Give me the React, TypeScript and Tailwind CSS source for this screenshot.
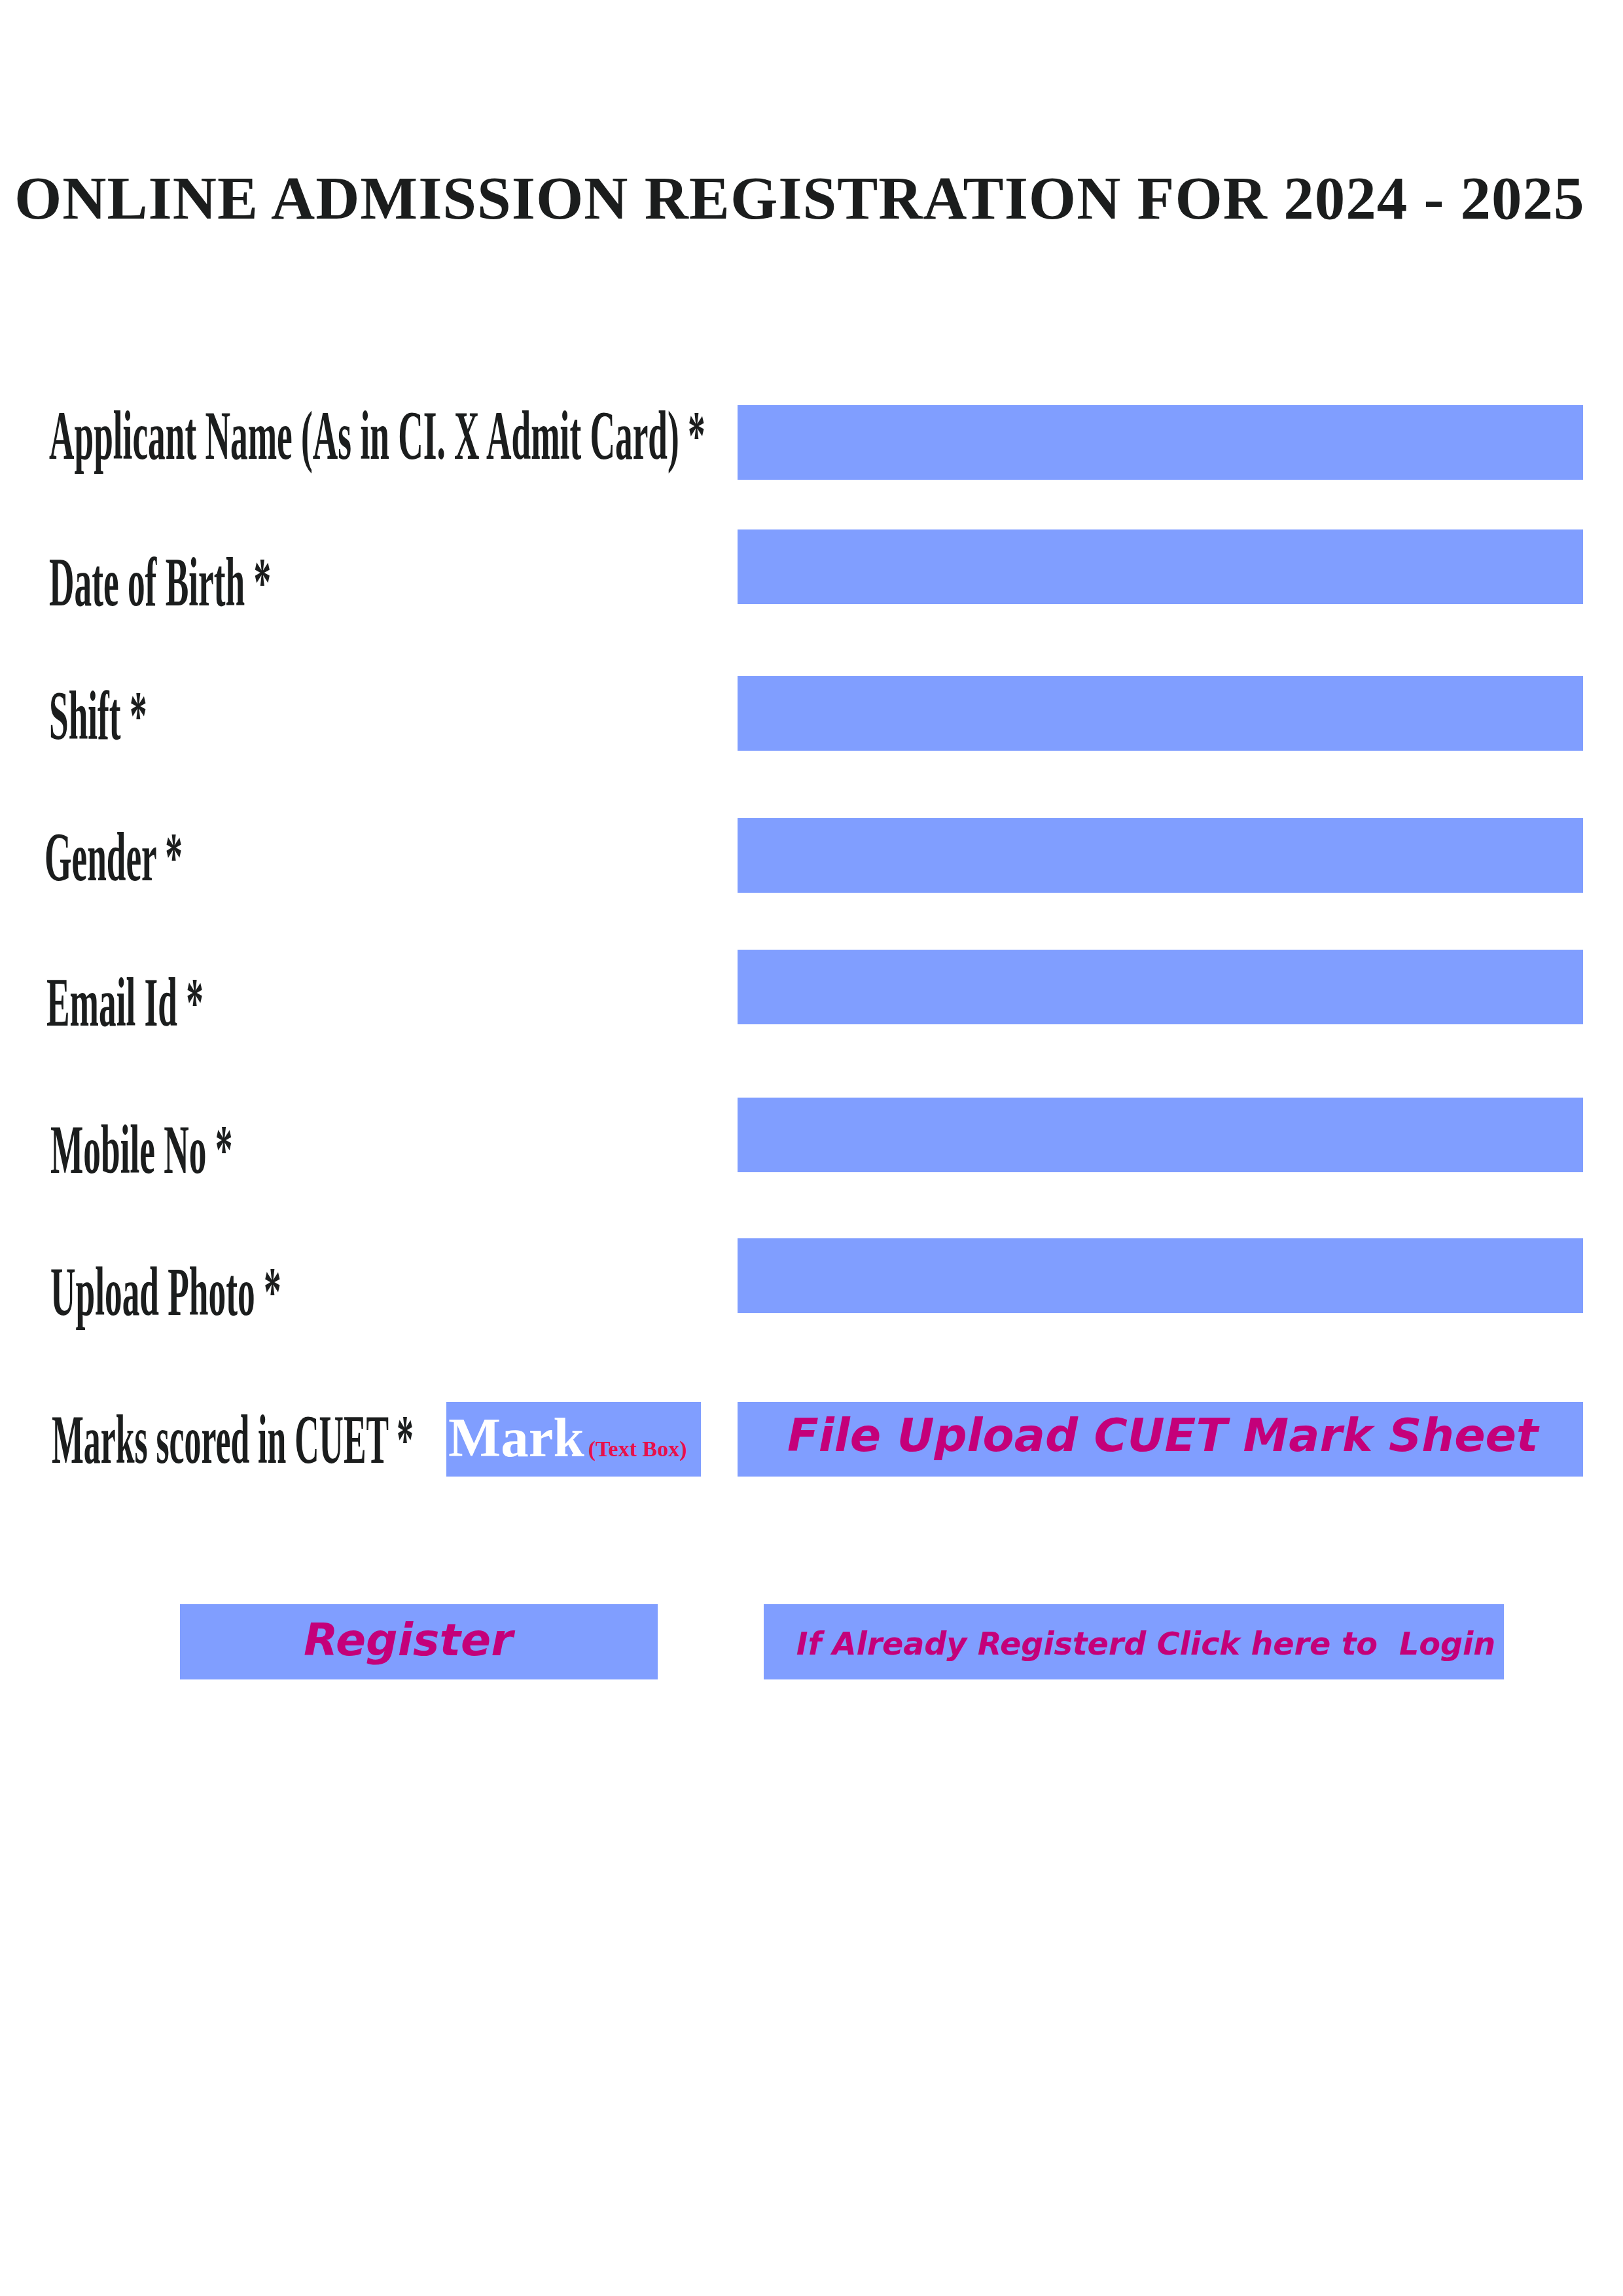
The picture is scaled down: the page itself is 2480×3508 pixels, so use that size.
const labelFont = { fontFamily: '"Liberation Serif", "Times New Roman", serif' };
const sansFont = { fontFamily: '"DejaVu Sans", Verdana, sans-serif' };

type Row = { label: string; mt: string; labelMt: string; labelMl: string };

const rows: Row[] = [
  { label: "Applicant Name (As in CI. X Admit Card) *", mt: "mt-[270px]", labelMt: "mt-[-6px]", labelMl: "ml-0" },
  { label: "Date of Birth *", mt: "mt-[76px]", labelMt: "mt-[28px]", labelMl: "ml-0" },
  { label: "Shift *", mt: "mt-[110px]", labelMt: "mt-[8px]", labelMl: "ml-0" },
  { label: "Gender *", mt: "mt-[103px]", labelMt: "mt-[7px]", labelMl: "ml-[-7px]" },
  { label: "Email Id *", mt: "mt-[87px]", labelMt: "mt-[28px]", labelMl: "ml-[-4px]" },
  { label: "Mobile No *", mt: "mt-[112px]", labelMt: "mt-[27px]", labelMl: "ml-[2px]" },
  { label: "Upload Photo *", mt: "mt-[101px]", labelMt: "mt-[29px]", labelMl: "ml-[2px]" },
];

function Label({ text, className, scale = "scale-x-[0.503]" }: { text: string; className: string; scale?: string }) {
  return (
    <div
      className={`whitespace-nowrap origin-left ${scale} font-bold text-[106px] leading-none text-[#1b1d1d] ${className}`}
      style={labelFont}
    >
      {text}
    </div>
  );
}

function App() {
  return (
    <div className="w-[2480px] min-h-[3508px] bg-white">
      <h1
        className="pt-[256px] pl-[22px] whitespace-nowrap font-bold text-[93px] leading-none tracking-[1px] text-[#1b1d1d]"
        style={labelFont}
      >
        ONLINE ADMISSION REGISTRATION FOR 2024 - 2025
      </h1>

      <div className="pl-[75px]">
        {rows.map((r) => (
          <div key={r.label} className={`flex h-[114px] ${r.mt}`}>
            <div className="w-[1052px] shrink-0">
              <Label text={r.label} className={`${r.labelMt} ${r.labelMl}`} />
            </div>
            <div className="w-[1292px] h-[114px] bg-[#809eff]" />
          </div>
        ))}

        <div className="flex h-[114px] mt-[136px]">
          <div className="w-[1052px] shrink-0 flex">
            <div className="w-[607px] shrink-0">
              <Label text="Marks scored in CUET *" className="mt-[5px] ml-[4px]" scale="scale-x-[0.488]" />
            </div>
            <div
              className="w-[389px] h-[114px] bg-[#809eff] flex items-baseline pt-[12px] pl-[3px] whitespace-nowrap"
              style={labelFont}
            >
              <span className="text-[85px] leading-none font-bold text-white">Mark</span>
              <span className="ml-[6px] text-[34px] leading-none font-bold text-[#e8104a]">(Text Box)</span>
            </div>
          </div>
          <div
            className="w-[1292px] h-[114px] bg-[#809eff] pt-[16px] pl-[76px] whitespace-nowrap font-bold italic text-[70px] leading-none text-[#c4007a]"
            style={sansFont}
          >
            File Upload CUET Mark Sheet
          </div>
        </div>
      </div>

      <div className="flex mt-[195px] pl-[275px] gap-[162px]" style={sansFont}>
        <div className="w-[730px] h-[115px] bg-[#809eff] pt-[21px] pl-[189px] cursor-pointer font-bold italic text-[68px] leading-none text-[#c4007a]">
          Register
        </div>
        <div className="w-[1131px] h-[115px] bg-[#809eff] pt-[37px] pl-[50px] cursor-pointer whitespace-pre font-bold italic text-[47.5px] leading-none text-[#c4007a]">
          {"If Already Registerd Click here to  Login"}
        </div>
      </div>
    </div>
  );
}

export default App;
